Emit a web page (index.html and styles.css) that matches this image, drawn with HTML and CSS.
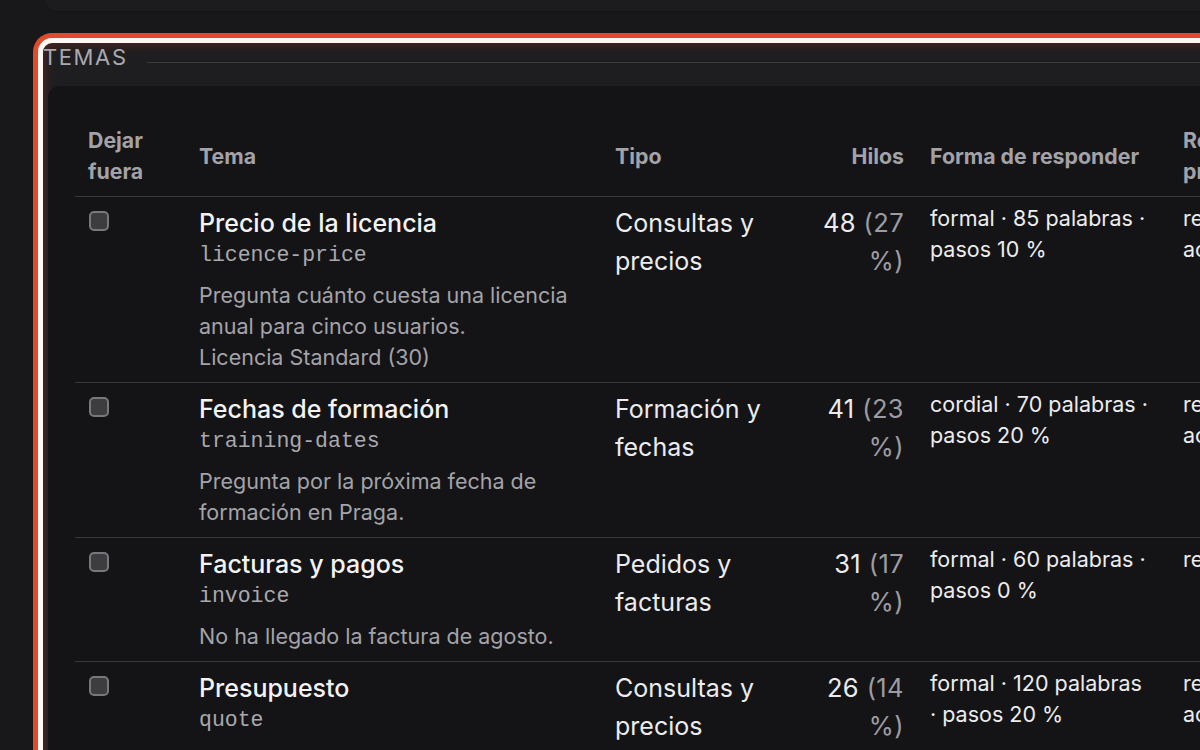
FILE: index.html
```html
<!DOCTYPE html>
<html lang="es">
<head>
<meta charset="utf-8">
<title>Temas</title>
<link rel="stylesheet" href="styles.css">
</head>
<body>
<div class="page">
  <div class="top-card"></div>
  <section class="topics">
    <div class="legend-row">
      <span class="legend">TEMAS</span>
      <span class="legend-line"></span>
    </div>
    <div class="table-wrap">
      <table class="topic-table">
        <colgroup>
          <col class="c-skip">
          <col class="c-topic">
          <col class="c-type">
          <col class="c-threads">
          <col class="c-form">
          <col class="c-resp">
        </colgroup>
        <thead>
          <tr>
            <th>Dejar fuera</th>
            <th>Tema</th>
            <th>Tipo</th>
            <th class="num">Hilos</th>
            <th>Forma de responder</th>
            <th>Respuesta prevista</th>
          </tr>
        </thead>
        <tbody>
          <tr>
            <td><input type="checkbox" class="check"></td>
            <td>
              <div class="title">Precio de la licencia</div>
              <div class="slug">licence-price</div>
              <div class="desc">Pregunta cuánto cuesta una licencia anual para cinco usuarios.<br>Licencia Standard (30)</div>
            </td>
            <td class="type">Consultas y precios</td>
            <td class="num big">48 <span class="pct">(27 %)</span></td>
            <td class="form">formal · 85 palabras · pasos 10 %</td>
            <td class="form resp">revisar actualizar</td>
          </tr>
          <tr>
            <td><input type="checkbox" class="check"></td>
            <td>
              <div class="title">Fechas de formación</div>
              <div class="slug">training-dates</div>
              <div class="desc">Pregunta por la próxima fecha de formación en Praga.</div>
            </td>
            <td class="type">Formación y fechas</td>
            <td class="num big">41 <span class="pct">(23 %)</span></td>
            <td class="form">cordial · 70 palabras · pasos 20 %</td>
            <td class="form resp">revisar actualizar</td>
          </tr>
          <tr>
            <td><input type="checkbox" class="check"></td>
            <td>
              <div class="title">Facturas y pagos</div>
              <div class="slug">invoice</div>
              <div class="desc">No ha llegado la factura de agosto.</div>
            </td>
            <td class="type">Pedidos y facturas</td>
            <td class="num big">31 <span class="pct">(17 %)</span></td>
            <td class="form">formal · 60 palabras · pasos 0 %</td>
            <td class="form resp">revisada</td>
          </tr>
          <tr>
            <td><input type="checkbox" class="check"></td>
            <td>
              <div class="title">Presupuesto</div>
              <div class="slug">quote</div>
              <div class="desc">Pide un presupuesto para una instalación en la oficina.</div>
            </td>
            <td class="type">Consultas y precios</td>
            <td class="num big">26 <span class="pct">(14 %)</span></td>
            <td class="form">formal · 120 palabras · pasos 20 %</td>
            <td class="form resp">revisar actualizar</td>
          </tr>
        </tbody>
      </table>
    </div>
  </section>
</div>
</body>
</html>
```

FILE: styles.css
```css
* { box-sizing: border-box; }

html, body {
  margin: 0;
  height: 100%;
  overflow: hidden;
  background: #18181b;
  font-family: Inter, "Noto Sans", sans-serif;
  color: #ececee;
}

.page {
  padding-left: 38px;
}

.top-card {
  height: 12px;
  margin-left: 7px;
  margin-right: -40px;
  margin-bottom: 26px;
  background: #1c1c1f;
  border-bottom: 1px solid #131315;
  border-bottom-left-radius: 14px;
}

.topics {
  margin-right: -60px;
  border: 5px solid #fdf7f5;
  border-radius: 14px;
  box-shadow: 0 0 0 5px #e24b2a, inset 0 0 12px rgba(190, 55, 30, 0.45);
  background: #1e1e21;
  height: 760px;
}

.legend-row {
  display: flex;
  align-items: flex-start;
  height: 43px;
  padding-left: 0;
}

.legend {
  font-size: 22px;
  letter-spacing: 1.6px;
  color: #a9a9ae;
  line-height: 26px;
  padding-top: 1px;
}

.legend-line {
  flex: 1;
  margin-left: 19px;
  margin-top: 19px;
  border-top: 1px solid #3a3a3f;
}

.table-wrap {
  margin-left: 5px;
  background: #141416;
  border-top-left-radius: 12px;
  padding: 24px 0 0 27px;
  height: 700px;
  overflow: hidden;
}

.topic-table {
  border-collapse: collapse;
  table-layout: fixed;
  width: 1227px;
}

.c-skip { width: 111px; }
.c-topic { width: 416px; }
.c-type { width: 200px; }
.c-threads { width: 115px; }
.c-form { width: 253px; }
.c-resp { width: 132px; }

th {
  text-align: left;
  font-weight: 700;
  font-size: 21.3px;
  line-height: 31px;
  color: #a2a2a8;
  padding: 15px 13px 9px;
  vertical-align: middle;
  border-bottom: 1px solid #38383c;
}

td {
  padding: 11px 13px 9px;
  vertical-align: top;
  border-bottom: 1px solid #38383c;
}

.num { text-align: right; }

.check {
  appearance: none;
  -webkit-appearance: none;
  display: block;
  width: 20px;
  height: 20px;
  margin: 3px 0 0 1px;
  border: 2px solid #77777c;
  border-radius: 5px;
  background: #3d3d40;
}

.title {
  font-size: 25px;
  font-weight: 500;
  line-height: 31px;
  color: #f3f3f4;
}

.slug {
  font-family: "Liberation Mono", "DejaVu Sans Mono", monospace;
  font-size: 21.5px;
  line-height: 32px;
  color: #a9a9ae;
}

.desc {
  margin-top: 9px;
  font-size: 21.5px;
  line-height: 31px;
  color: #a3a3a9;
}

.type {
  font-size: 25px;
  line-height: 38px;
  color: #ececee;
  padding-top: 7px;
}

.big {
  font-size: 25.5px;
  line-height: 38px;
  color: #ececee;
  padding-top: 7px;
  letter-spacing: 0.4px;
}

.pct { color: #9c9ca2; }

.form {
  font-size: 21.5px;
  line-height: 31px;
  color: #ececee;
  padding-top: 6px;
  padding-right: 18px;
}

.resp { padding-right: 13px; }
```
